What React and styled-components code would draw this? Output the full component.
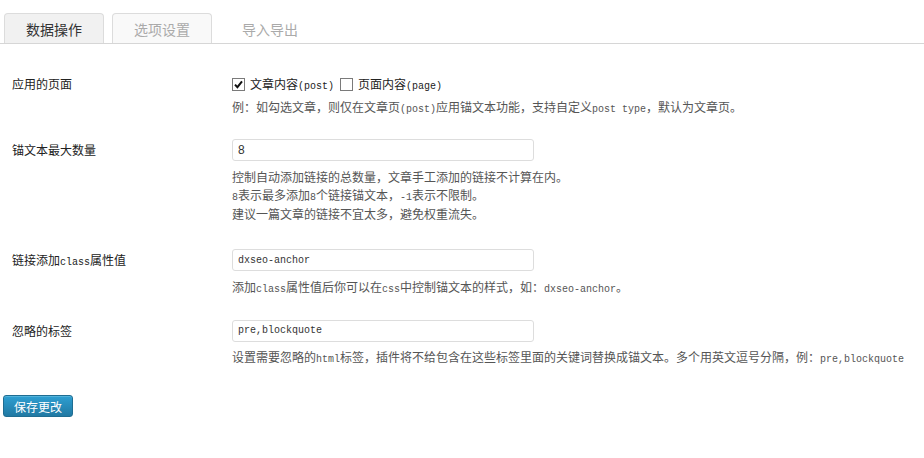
import React from 'react'
import styled, { createGlobalStyle } from 'styled-components'
import { useState } from 'react'

const Global = createGlobalStyle`
  body {
    margin: 0;
    background: #fff;
    font-family: "Noto Sans CJK SC", "Liberation Sans", sans-serif;
    font-size: 12px;
    color: #222;
  }
`

const tabs = ['数据操作', '选项设置', '导入导出']

function CheckBox({ checked, onToggle, children }) {
  return (
    <Check onClick={onToggle}>
      <Box>
        {checked && (
          <svg width='9' height='9' viewBox='0 0 9 9'>
            <path d='M1 4.6 L3.4 7.2 L8 1.4' fill='none' stroke='#111' strokeWidth='2' />
          </svg>
        )}
      </Box>
      <span>{children}</span>
    </Check>
  )
}

function App() {
  const [active, setActive] = useState(0)
  const [post, setPost] = useState(true)
  const [page, setPage] = useState(false)

  return (
    <Page>
      <Global />
      <Tabs>
        {tabs.map((t, i) => (
          <Tab key={t} $active={i === active} $plain={i === 2} onClick={() => setActive(i)}>
            {t}
          </Tab>
        ))}
      </Tabs>
      <Form>
        <Row $top={13}>
          <Label $line={18}>应用的页面</Label>
          <Field>
            <Checks>
              <CheckBox checked={post} onToggle={() => setPost(!post)}>
                文章内容<Code>(post)</Code>
              </CheckBox>
              <CheckBox checked={page} onToggle={() => setPage(!page)}>
                页面内容<Code>(page)</Code>
              </CheckBox>
            </Checks>
            <Desc $top={5}>
              例：如勾选文章，则仅在文章页<Code>(post)</Code>应用锚文本功能，支持自定义<Code>post type</Code>，默认为文章页。
            </Desc>
          </Field>
        </Row>
        <Row $top={10}>
          <Label>锚文本最大数量</Label>
          <Field>
            <Input defaultValue='8' $sans />
            <Desc>
              控制自动添加链接的总数量，文章手工添加的链接不计算在内。<br />
              <Code>8</Code>表示最多添加<Code>8</Code>个链接锚文本，<Code>-1</Code>表示不限制。<br />
              建议一篇文章的链接不宜太多，避免权重流失。
            </Desc>
          </Field>
        </Row>
        <Row $top={14}>
          <Label>链接添加<Code>class</Code>属性值</Label>
          <Field>
            <Input defaultValue='dxseo-anchor' />
            <Desc>
              添加<Code>class</Code>属性值后你可以在<Code>css</Code>中控制锚文本的样式，如：<Code>dxseo-anchor</Code>。
            </Desc>
          </Field>
        </Row>
        <Row $top={11}>
          <Label>忽略的标签</Label>
          <Field>
            <Input defaultValue='pre,blockquote' />
            <Desc $top={6}>
              设置需要忽略的<Code>html</Code>标签，插件将不给包含在这些标签里面的关键词替换成锚文本。多个用英文逗号分隔，例：<Code>pre,blockquote</Code>
            </Desc>
          </Field>
        </Row>
        <Save type='button'>保存更改</Save>
      </Form>
    </Page>
  )
}

export default App

const Page = styled.div`
  width: 924px;
  height: 458px;
  padding: 13px 0 0 3px;
  box-sizing: border-box;
  overflow: hidden;
`
const Tabs = styled.div`
  display: flex;
  gap: 8px;
  border-bottom: 1px solid #d6d6d6;
  margin-left: -3px;
  padding-left: 4px;
`
const Tab = styled.div`
  width: 100px;
  height: 30px;
  box-sizing: border-box;
  display: flex;
  align-items: center;
  justify-content: center;
  font-size: 14px;
  color: ${p => (p.$active ? '#333' : '#aaa')};
  background: ${p => (p.$plain ? 'transparent' : p.$active ? '#f1f1f1' : '#f9f9f9')};
  border: 1px solid ${p => (p.$plain ? 'transparent' : '#dcdcdc')};
  border-bottom: none;
  border-radius: 4px 4px 0 0;
  cursor: pointer;
`
const Form = styled.form`
  padding-top: 18px;
`
const Row = styled.div`
  display: grid;
  grid-template-columns: 220px 1fr;
  padding: ${p => p.$top || 12}px 0 12px 9px;
`
const Label = styled.div`
  height: ${p => p.$line || 22}px;
  line-height: ${p => p.$line || 22}px;
  color: #222;
`
const Field = styled.div`
  display: flex;
  flex-direction: column;
  align-items: flex-start;
`
const Checks = styled.div`
  display: flex;
  align-items: center;
  gap: 6px;
  height: 18px;
  line-height: 18px;
  color: #222;
`
const Check = styled.label`
  display: flex;
  align-items: center;
  cursor: pointer;
`
const Box = styled.span`
  width: 13px;
  height: 13px;
  box-sizing: border-box;
  margin-right: 5px;
  border: 1px solid #7a7a7a;
  background: #fff;
  display: flex;
  align-items: center;
  justify-content: center;
`
const Code = styled.span`
  font-family: "Liberation Mono", monospace;
  font-size: 10px;
  line-height: 1;
`
const Desc = styled.div`
  margin-top: ${p => (p.$top ? p.$top : 7)}px;
  line-height: 18.5px;
  color: #555;
  white-space: nowrap;
`
const Input = styled.input`
  width: 302px;
  height: 22px;
  box-sizing: border-box;
  border: 1px solid #ddd;
  border-radius: 3px;
  padding: 0 5px;
  font-family: ${p => (p.$sans ? '"Liberation Sans", sans-serif' : '"Liberation Mono", monospace')};
  font-size: ${p => (p.$sans ? 12 : 10)}px;
  color: #333;
  outline: none;
`
const Save = styled.button`
  margin-top: 17px;
  width: 70px;
  height: 22px;
  border: 1px solid #1f6d92;
  border-radius: 3px;
  background: linear-gradient(#2e9fd2, #2179a3);
  color: #fff;
  font-family: "Noto Sans CJK SC", sans-serif;
  font-size: 12px;
  padding: 0;
  box-shadow: inset 0 1px 0 rgba(120, 200, 230, 0.5);
`
